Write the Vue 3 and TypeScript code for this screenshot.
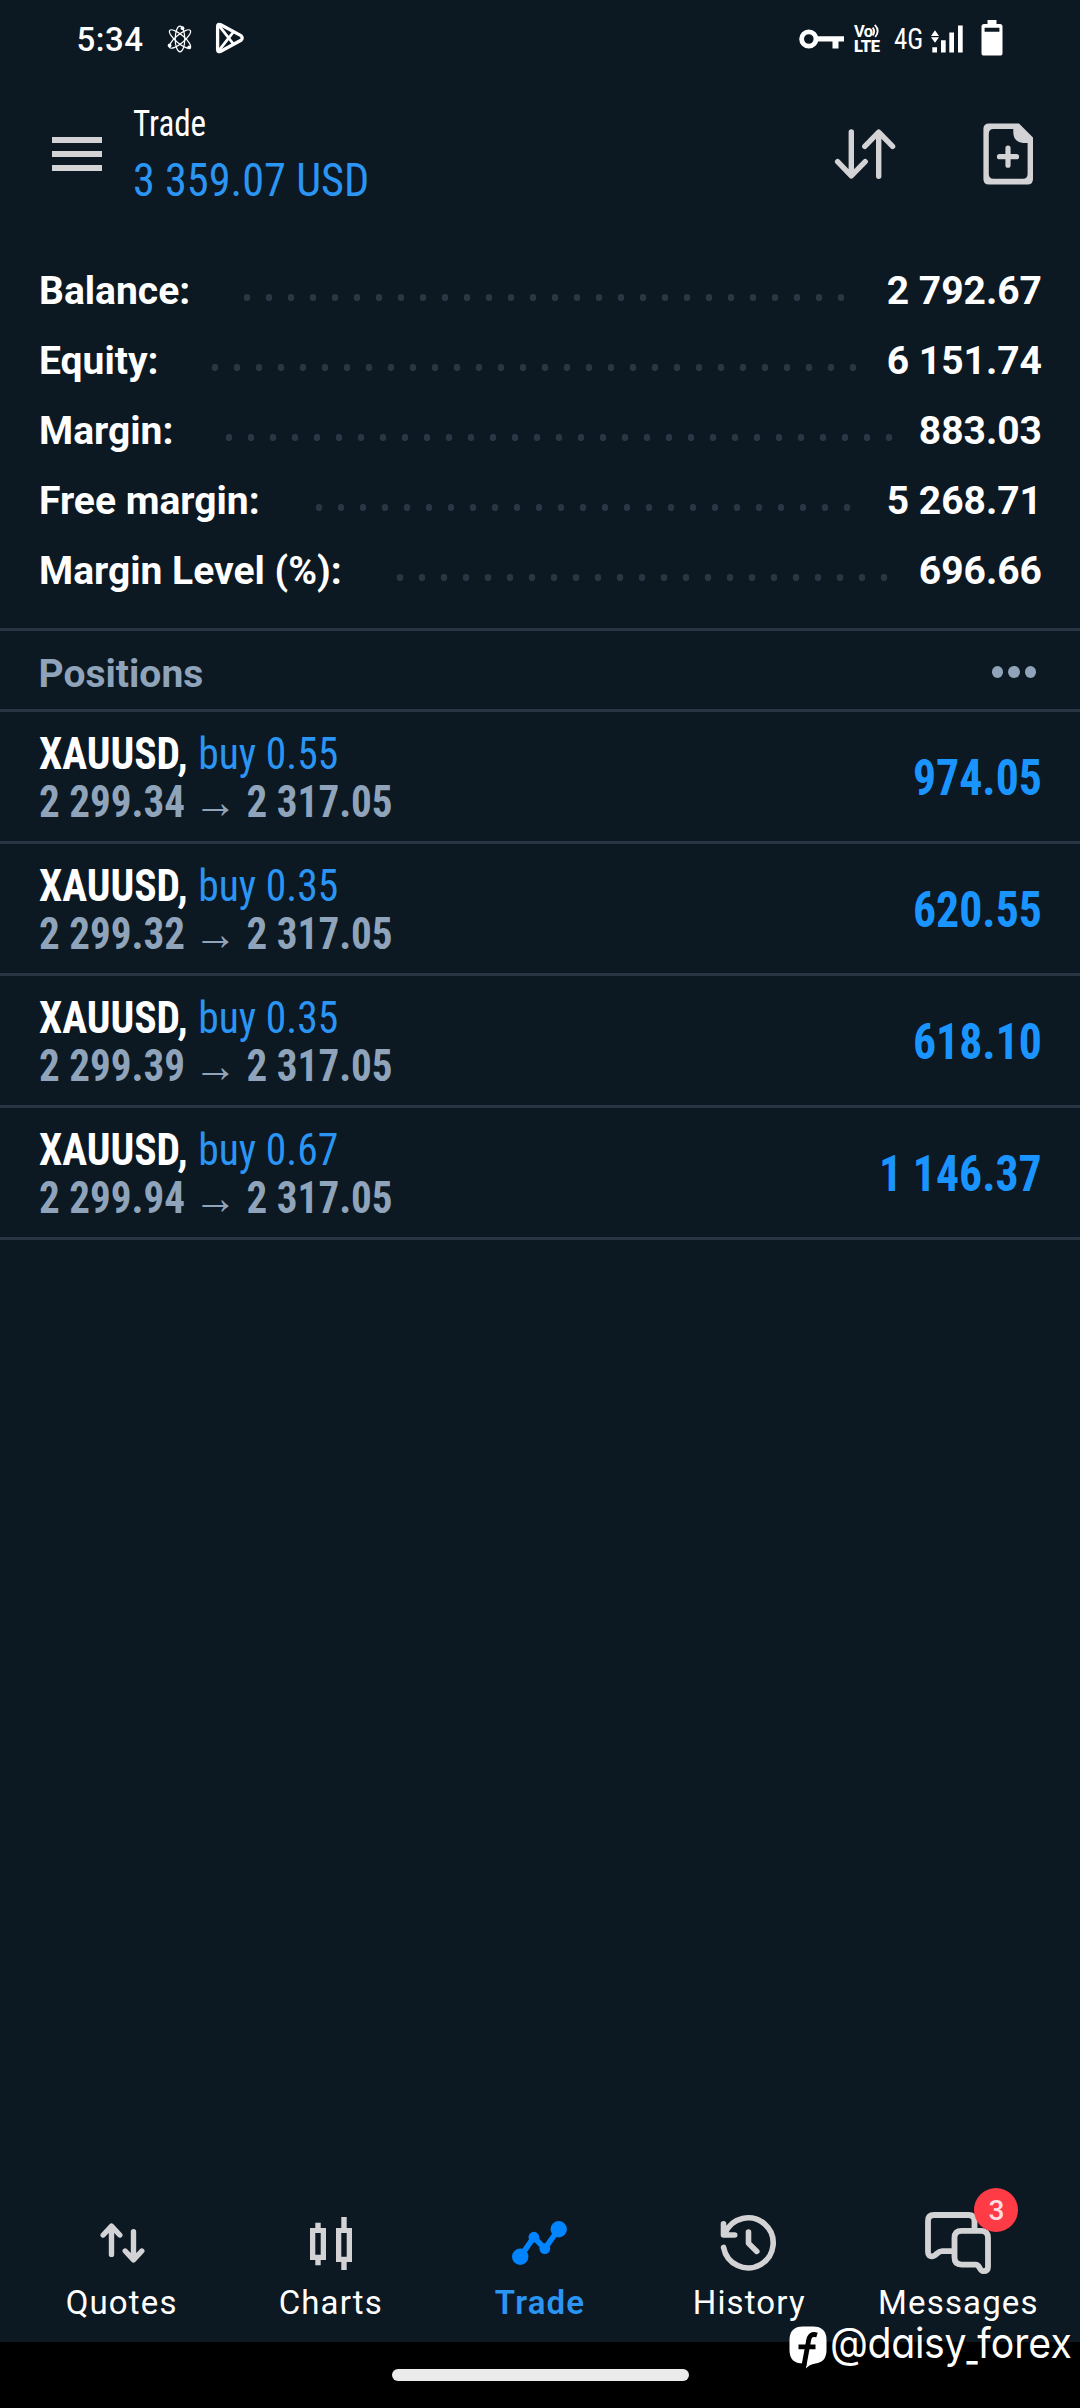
<script setup lang="ts">
interface SummaryRow { label: string; value: string; start: number; dots: number }
interface Position { symbol: string; side: string; open: string; current: string; profit: string }

const summary: SummaryRow[] = [
  { label: 'Balance:', value: '2 792.67', start: 198.6, dots: 28 },
  { label: 'Equity:', value: '6 151.74', start: 166.6, dots: 30 },
  { label: 'Margin:', value: '883.03', start: 181.4, dots: 31 },
  { label: 'Free margin:', value: '5 268.71', start: 270.6, dots: 25 },
  { label: 'Margin Level (%):', value: '696.66', start: 351.5, dots: 23 },
]

const positions: Position[] = [
  { symbol: 'XAUUSD,', side: 'buy 0.55', open: '2 299.34', current: '2 317.05', profit: '974.05' },
  { symbol: 'XAUUSD,', side: 'buy 0.35', open: '2 299.32', current: '2 317.05', profit: '620.55' },
  { symbol: 'XAUUSD,', side: 'buy 0.35', open: '2 299.39', current: '2 317.05', profit: '618.10' },
  { symbol: 'XAUUSD,', side: 'buy 0.67', open: '2 299.94', current: '2 317.05', profit: '1 146.37' },
]
</script>

<template>
  <div class="screen">
    <div class="status">
      <span class="time">5:34</span>
      <svg class="atom" viewBox="0 0 26 28" width="26" height="28" fill="none" stroke="#fff" stroke-width="1.2">
        <ellipse cx="13" cy="14" rx="4.8" ry="12.8" />
        <ellipse cx="13" cy="14" rx="4.2" ry="13.4" transform="rotate(50 13 14)" />
        <ellipse cx="13" cy="14" rx="4.2" ry="13.4" transform="rotate(-50 13 14)" />
        <g fill="#fff" stroke="none"><circle cx="15.5" cy="3.2" r="1.9" /><circle cx="2.6" cy="20.5" r="1.9" /><circle cx="22.2" cy="22.4" r="1.9" /></g>
      </svg>
      <svg class="play" viewBox="0 0 30 32" width="30" height="32" fill="none" stroke="#fff" stroke-width="3.3" stroke-linejoin="round">
        <path d="M2.6 4.5 Q2.6 1.4 5.8 2.8 L26 13.6 Q28.4 16 26 18.2 L5.8 29.2 Q2.6 30.6 2.6 27.4 Z" />
        <path d="M3.6 3.2 L18.4 22 M3.6 28.8 L18.4 10" stroke-width="2.8" />
      </svg>
      <span class="grow"></span>
      <svg class="key" viewBox="0 0 45 20" width="45" height="20">
        <circle cx="9.8" cy="10" r="7.2" fill="none" stroke="#fff" stroke-width="4.8" />
        <path d="M17 7.2H45V12.5H39.5V19.4H33.5V12.5H17Z" fill="#fff" />
      </svg>
      <span class="volte">
        <span class="vo">Vo<svg viewBox="0 0 8 14" width="8" height="14" fill="none" stroke="#fff" stroke-width="1.8"><path d="M.6 3.6Q3.800 7 .6 11.4M2.8 .8Q8.400 6.6 3.200 13" /></svg></span>
        <span class="lte">LTE</span>
      </span>
      <span class="net">4G</span>
      <svg class="signal" viewBox="0 0 32 28" width="32" height="28" fill="#fff">
        <path d="M0 10.9 4 5.2 8 10.9ZM0 12.2 8 12.2 4 17.8ZM1.3 22.2H6V27.6H1.3ZM10 15.2H14.7V27.6H10ZM18.3 7.6H23V27.6H18.3ZM27 .4H31.7V27.6H27Z" />
      </svg>
      <svg class="battery" viewBox="0 0 22 36" width="22" height="36">
        <path d="M6.5 0H15.5V4H19Q21.5 4 21.5 6.5V33Q21.5 35.6 19 35.6H3Q.5 35.6 .5 33V6.5Q.5 4 3 4H6.5ZM3.6 7.8V11.8H18.4V7.8Z" fill="#fff" fill-rule="evenodd" />
      </svg>
    </div>

    <header class="header">
      <svg class="menu" viewBox="0 0 50 34" width="50" height="34" fill="#d3d3d5"><path d="M0 0H50V6H0ZM0 14H50V20H0ZM0 28H50V34H0Z" /></svg>
      <div class="titles">
        <div class="title"><span>Trade</span></div>
        <div class="total"><span>3 359.07 USD</span></div>
      </div>
      <svg class="sort" viewBox="834 128 62 52" width="62" height="52" fill="none" stroke="#d3d3d5" stroke-width="5.4" stroke-linecap="round" stroke-linejoin="round">
        <path d="M851.3 132V175.6M837.6 161.6 851.3 175.8 865.2 161.6M878.7 176.2V132.4M864.8 146.4 878.7 132.2 892.6 146.4" />
      </svg>
      <svg class="neworder" viewBox="983 123 51 62" width="51" height="62" fill="#d3d3d5">
        <path fill-rule="evenodd" d="M989 123.5H1019L1033 137.5V179Q1033 184.6 1027.4 184.6H989Q983.4 184.6 983.4 179V129Q983.4 123.5 989 123.5ZM993.5 129Q988.8 129 988.8 133.7V174Q988.8 178.7 993.5 178.7H1022.9Q1027.6 178.7 1027.6 174V143H1023Q1013.3 141.6 1013.3 132.5V129Z" />
        <path d="M1008 148.2V165.2M999.5 156.7H1016.5" fill="none" stroke="#d3d3d5" stroke-width="5.2" stroke-linecap="round" />
      </svg>
    </header>

    <section class="summary">
      <div v-for="row in summary" :key="row.label" class="row">
        <span class="label" :style="{ width: row.start - 2 + 'px' }">{{ row.label }}</span>
        <span class="leader" :style="{ width: row.dots * 22 + 'px' }"></span>
        <span class="value">{{ row.value }}</span>
      </div>
    </section>

    <div class="section-head">
      <span class="section-title">Positions</span>
      <span class="more"><i></i><i></i><i></i></span>
    </div>

    <div v-for="(p, i) in positions" :key="i" class="position">
      <div class="deal">
        <div class="line first"><b class="symbol">{{ p.symbol }}</b><span class="side">{{ p.side }}</span></div>
        <div class="line second"><span class="price">{{ p.open }}</span><span class="arrow">→</span><span class="price">{{ p.current }}</span></div>
      </div>
      <span class="profit">{{ p.profit }}</span>
    </div>

    <div class="grow"></div>

    <nav class="nav">
      <div class="tab">
        <svg viewBox="87.5 2210 68 68" width="68" height="68" fill="none" stroke="#d3d3d5" stroke-width="5.4" stroke-linecap="round" stroke-linejoin="round">
          <path d="M111 2254.4V2226.4M102.7 2235 111 2226.2 119.3 2235M133 2231.8V2259.8M124.7 2251 133 2259.8 141.3 2251" />
        </svg>
        <span>Quotes</span>
      </div>
      <div class="tab">
        <svg viewBox="297 2210 68 68" width="68" height="68" fill="#d3d3d5">
          <path fill-rule="evenodd" d="M315.3 2222.7H320.7V2228H326V2260H320.7V2265.3H315.3V2260H310V2228H315.3ZM315.3 2232.9V2254.7H320.7V2232.9ZM341.3 2217H346.7V2228H352V2262H346.7V2270H341.3V2262H336V2228H341.3ZM341.3 2232.9V2256.7H346.7V2232.9Z" />
        </svg>
        <span>Charts</span>
      </div>
      <div class="tab active">
        <svg viewBox="506.5 2210 68 68" width="68" height="68" fill="#0084ff">
          <path d="M520.7 2256.8 534.4 2237.2 545.3 2248.6 559.2 2229.2" fill="none" stroke="#0084ff" stroke-width="5.6" />
          <circle cx="520.7" cy="2256.8" r="8.2" /><circle cx="559.2" cy="2229.2" r="8.2" />
          <circle cx="534.4" cy="2237.2" r="5.4" /><circle cx="545.3" cy="2248.6" r="5.4" />
        </svg>
        <span>Trade</span>
      </div>
      <div class="tab">
        <svg viewBox="715.5 2210 68 68" width="68" height="68" fill="none" stroke="#d3d3d5" stroke-width="5.6" stroke-linecap="round" stroke-linejoin="round">
          <path d="M724.1 2247.4A25 25 0 1 0 725.6 2233.2M724 2223.8V2235H735.2M749 2232V2243.2L757.3 2251.4" />
        </svg>
        <span>History</span>
      </div>
      <div class="tab">
        <div class="icon">
          <svg viewBox="924 2210 68 68" width="68" height="68" fill="none" stroke="#d3d3d5" stroke-width="5.8" stroke-linecap="round" stroke-linejoin="round">
            <path d="M974.5 2230V2221Q974.5 2215 968.5 2215H934Q928 2215 928 2221V2252Q928 2256.6 932.5 2256.3C936.5 2256 937 2251.2 942 2251.2H953" />
            <path d="M961.6 2230.8H981Q988 2230.8 988 2237.8V2267Q988 2271.2 983.4 2271.2C979 2271.2 980.4 2264.6 975.5 2264.6H961.6Q954.5 2264.6 954.5 2257.6V2237.8Q954.5 2230.8 961.6 2230.8Z" />
          </svg>
          <span class="badge">3</span>
        </div>
        <span>Messages</span>
      </div>
    </nav>

    <div class="gesture"><div class="pill"></div></div>

    <div class="watermark">
      <svg viewBox="0 0 38 43" width="38" height="43">
        <path d="M14 .5H24Q37.5 .5 37.5 14V24Q37.5 36 26.5 37.5Q20 38.500 17 42.5L17.5 37.5H14Q.5 37.500 .5 24V14Q.5 .5 14 .5Z" fill="#fff" />
        <path d="M28 9Q20.800 6.800 19.600 14.5L15 39.500M9.5 20.800H26.5" fill="none" stroke="#000" stroke-width="4.800" />
      </svg>
      <span class="handle"><b>@daisy</b><i>_</i>forex</span>
    </div>
  </div>
</template>

<style>
body { background: #0c1822; }
</style>

<style scoped>
.screen { position: relative; width: 1080px; height: 2408px; display: flex; flex-direction: column; overflow: hidden; background: #0c1822; color: #fff; font-family: Roboto, "Noto Sans", sans-serif; }
svg { display: block; flex: none; }
.grow { flex: 1; }

.status { height: 78px; flex: none; display: flex; align-items: center; padding: 0 77px 0 76.5px; }
.time { width: 90.5px; font-size: 33px; font-weight: 500; line-height: 40px; letter-spacing: .5px; padding-top: 1px; }
.play { margin-left: 22px; margin-top: -2px; }
.volte { width: 26px; margin-left: 10.5px; display: flex; flex-direction: column; height: 28px; font-weight: 700; }
.vo { height: 14px; line-height: 14px; font-size: 16.5px; display: flex; letter-spacing: -.7px; }
.vo svg { margin-top: -1px; }
.lte { height: 14px; line-height: 15px; font-size: 16.5px; font-weight: 900; letter-spacing: -.5px; }
.net { width: 38px; margin-left: 13.5px; margin-right: -.5px; font: 450 29px/34px "Roboto Condensed", sans-serif; transform: scaleX(.93); transform-origin: left; }
.battery { margin-left: 18px; margin-top: -2px; }

.header { height: 178px; flex: none; display: flex; align-items: flex-start; padding: 0 46px 0 52px; box-sizing: border-box; }
.menu { margin-top: 59px; }
.titles { margin: 24px 0 0 30.5px; flex: 1; font-family: "Roboto Condensed", Roboto, sans-serif; white-space: nowrap; }
.titles span { display: inline-block; transform-origin: left; }
.title { font-size: 36px; line-height: 44px; }
.title span { transform: scaleX(.917); }
.total { margin-top: 4px; font-size: 47px; line-height: 60px; color: #2b95f3; }
.total span { transform: scaleX(.942); }
.sort { margin-top: 50px; }
.neworder { margin: 45px 0 0 87px; }

.summary { padding: 0 38px 22px; border-bottom: 3px solid #2a3543; font-size: 39px; font-weight: 700; }
.row { display: flex; height: 70px; line-height: 70px; white-space: nowrap; }
.label { flex: none; padding-left: 1px; }
.leader { flex: none; background: radial-gradient(ellipse 3.6px 3.8px at 50% 41.5px, #2b3645 85%, transparent 100%) 0 0 / 22px 70px repeat-x; }
.value { flex: 1; text-align: right; }

.section-head { height: 81px; box-sizing: border-box; flex: none; display: flex; align-items: center; justify-content: space-between; padding: 4px 44px 0 38px; border-bottom: 3px solid #2a3543; color: #8fa4ba; }
.section-title { font-size: 39px; font-weight: 700; padding-top: 4px; line-height: 50px; text-indent: .6px; }
.more { display: flex; gap: 5px; }
.more i { width: 11.5px; height: 12px; border-radius: 50%; background: #8fa4ba; }

.position { height: 132px; box-sizing: border-box; flex: none; display: flex; justify-content: space-between; padding: 0 38px; border-bottom: 3px solid #2a3543; font-family: "Roboto Condensed", Roboto, sans-serif; white-space: nowrap; }
.deal { padding-top: 18px; }
.line { height: 48px; line-height: 48px; font-size: 44px; display: flex; transform-origin: left; }
.first { transform: scaleX(.945); }
.symbol { font-weight: 700; width: 168.5px; margin-left: 1px; }
.side { color: #2b95f3; }
.second { transform: scaleX(.934); color: #8fa4ba; font-weight: 700; }
.price { margin-left: 1px; }
.arrow { width: 65px; display: flex; justify-content: center; font-family: Roboto, sans-serif; font-weight: 700; font-size: 47px; }
.profit { margin-top: 36px; line-height: 60px; font-size: 50px; font-weight: 700; color: #1a94ff; transform: scaleX(.915); transform-origin: right; }

.nav { flex: none; display: flex; padding: 0 17px 19px; }
.tab { flex: 1; display: flex; flex-direction: column; align-items: center; font-size: 33px; line-height: 40px; letter-spacing: 1.15px; }
.tab > span { margin-top: 5px; }
.active { color: #2b95f3; font-weight: 600; }
.icon { position: relative; }
.badge { position: absolute; left: 50px; top: -22px; width: 44px; height: 44px; border-radius: 50%; background: #ff3b46; color: #ffdfe2; font-size: 28px; font-weight: 500; line-height: 45px; text-align: center; letter-spacing: 0; }

.gesture { height: 66px; flex: none; background: #000; }
.pill { width: 297px; height: 12px; border-radius: 6px; background: #ebebeb; margin: 27px auto 0; }

.watermark { position: absolute; left: 789px; top: 2326px; display: flex; }
.handle { margin: -4px 0 0 3px; font: 370 42px/42px Inter, sans-serif; font-feature-settings: "cv11"; white-space: nowrap; text-shadow: 1px 1px 1px #000; transform: scaleX(.935); transform-origin: left; }
.handle b { font-weight: inherit; letter-spacing: -.4px; }
.handle i { display: inline-block; width: 12px; font-style: normal; transform: translateY(3px) scaleX(.62); transform-origin: left; }
</style>
